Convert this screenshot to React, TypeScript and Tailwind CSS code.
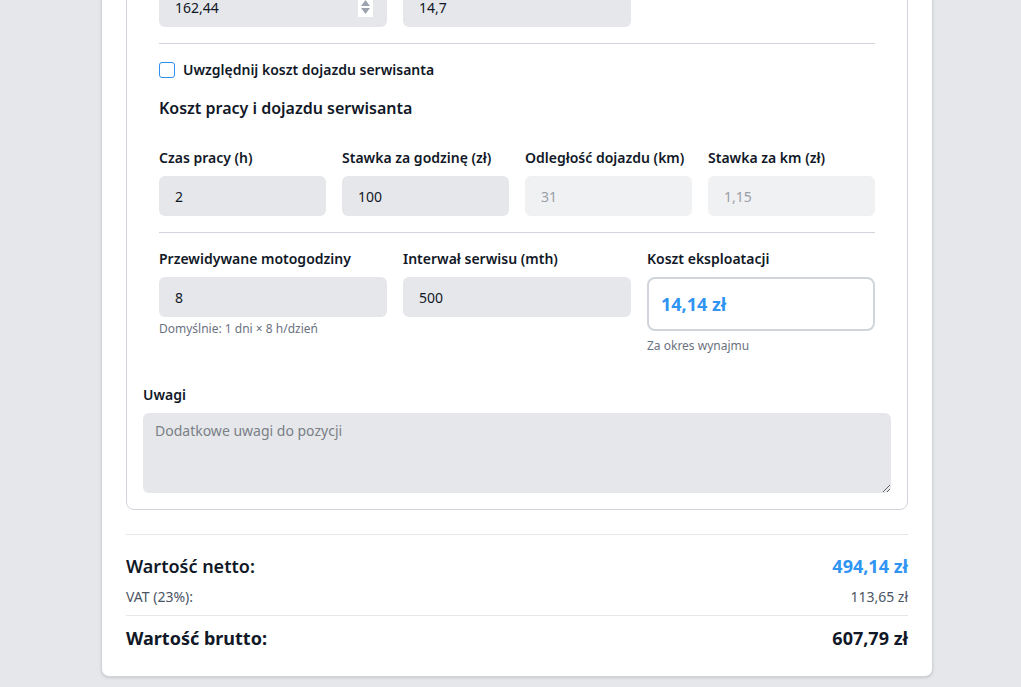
import React from "react";

const font = { fontFamily: '"Segoe UI", "Noto Sans", sans-serif' };

function Field({
  label,
  value,
  disabled,
  hint,
}: {
  label: string;
  value: string;
  disabled?: boolean;
  hint?: string;
}) {
  return (
    <div>
      <label className="block text-sm font-semibold text-[#111827] leading-5 mb-2">{label}</label>
      <input
        readOnly
        value={value}
        className={
          disabled
            ? "w-full h-10 rounded-md bg-[#f0f1f3] px-4 text-sm text-[#9a9ea6] outline-none"
            : "w-full h-10 rounded-md bg-[#e5e7eb] px-4 text-sm text-[#111827] outline-none"
        }
      />
      {hint && <p className="mt-1 text-xs leading-4 text-[#6b7280]">{hint}</p>}
    </div>
  );
}

export default function App() {
  return (
    <div className="h-[687px] overflow-hidden bg-[#e5e7eb]" style={font}>
      <div className="ml-[101px] w-[832px] -mt-[83px] bg-white border border-[#d1d5db] rounded-lg shadow-sm px-6 pt-6 pb-[25px]">
        {/* Position card (scrolled: top row labels are above the viewport) */}
        <div className="border border-[#d1d5db] rounded-lg p-4">
          <div className="px-4">
            <div className="grid grid-cols-3 gap-4 pt-7">
              <div className="relative">
                <input
                  readOnly
                  value="162,44"
                  className="w-full h-10 rounded-md bg-[#e5e7eb] px-4 text-sm text-[#111827] outline-none"
                />
                <div className="absolute right-[14px] top-[10px] w-[15px] h-[20px] bg-white flex flex-col items-center justify-center gap-[2px]">
                  <svg width="9" height="6" viewBox="0 0 9 6">
                    <path d="M0 6 L4.5 0 L9 6 Z" fill="#9ca3af" />
                  </svg>
                  <svg width="9" height="6" viewBox="0 0 9 6">
                    <path d="M0 0 L4.5 6 L9 0 Z" fill="#9ca3af" />
                  </svg>
                </div>
              </div>
              <input
                readOnly
                value="14,7"
                className="w-full h-10 rounded-md bg-[#e5e7eb] px-4 text-sm text-[#111827] outline-none"
              />
              <div />
            </div>

            <div className="mt-4 border-t border-[#d1d5db]" />

            <label className="mt-4 flex items-center gap-2 h-5">
              <span className="w-4 h-4 rounded-[3px] border-[1.5px] border-[#2f8ff0] bg-white" />
              <span className="text-sm font-semibold text-[#111827]">Uwzględnij koszt dojazdu serwisanta</span>
            </label>

            <h3 className="mt-4 text-base font-semibold leading-6 text-[#111827]">
              Koszt pracy i dojazdu serwisanta
            </h3>

            <div className="mt-[28px] grid grid-cols-4 gap-4">
              <Field label="Czas pracy (h)" value="2" />
              <Field label="Stawka za godzinę (zł)" value="100" />
              <Field label="Odległość dojazdu (km)" value="31" disabled />
              <Field label="Stawka za km (zł)" value="1,15" disabled />
            </div>

            <div className="mt-4 border-t border-[#d1d5db]" />

            <div className="mt-4 grid grid-cols-3 gap-4">
              <Field label="Przewidywane motogodziny" value="8" hint="Domyślnie: 1 dni × 8 h/dzień" />
              <Field label="Interwał serwisu (mth)" value="500" />
              <div>
                <label className="block text-sm font-semibold text-[#111827] leading-5 mb-2">Koszt eksploatacji</label>
                <div className="h-[54px] rounded-lg border-2 border-[#d1d5db] bg-white px-3 flex items-center">
                  <span className="text-lg font-bold text-[#2f94f2]">14,14 zł</span>
                </div>
                <p className="mt-[7px] text-xs leading-4 text-[#6b7280]">Za okres wynajmu</p>
              </div>
            </div>
          </div>

          <div className="mt-[31px]">
            <label className="block text-sm font-semibold text-[#111827] leading-5 mb-2">Uwagi</label>
            <textarea
              placeholder="Dodatkowe uwagi do pozycji"
              className="block w-full h-20 rounded-md bg-[#e5e7eb] px-3 py-2 text-sm text-[#111827] placeholder:text-[#7b7f86] outline-none"
            />
          </div>
        </div>

        {/* Summary */}
        <div className="mt-6 border-t border-[#e5e7eb] pt-[17px]">
          <div className="flex items-center justify-between h-7">
            <span className="text-lg font-semibold text-[#111827]">Wartość netto:</span>
            <span className="text-lg font-bold text-[#2f94f2]">494,14 zł</span>
          </div>
          <div className="mt-[7px] flex items-center justify-between h-5 text-sm text-[#4b5563]">
            <span>VAT (23%):</span>
            <span>113,65 zł</span>
          </div>
          <div className="mt-2 border-t border-[#e5e7eb] pt-2 flex items-center justify-between h-[36px]">
            <span className="text-lg font-bold text-[#111827]">Wartość brutto:</span>
            <span className="text-lg font-bold text-[#111827]">607,79 zł</span>
          </div>
        </div>
      </div>
    </div>
  );
}
